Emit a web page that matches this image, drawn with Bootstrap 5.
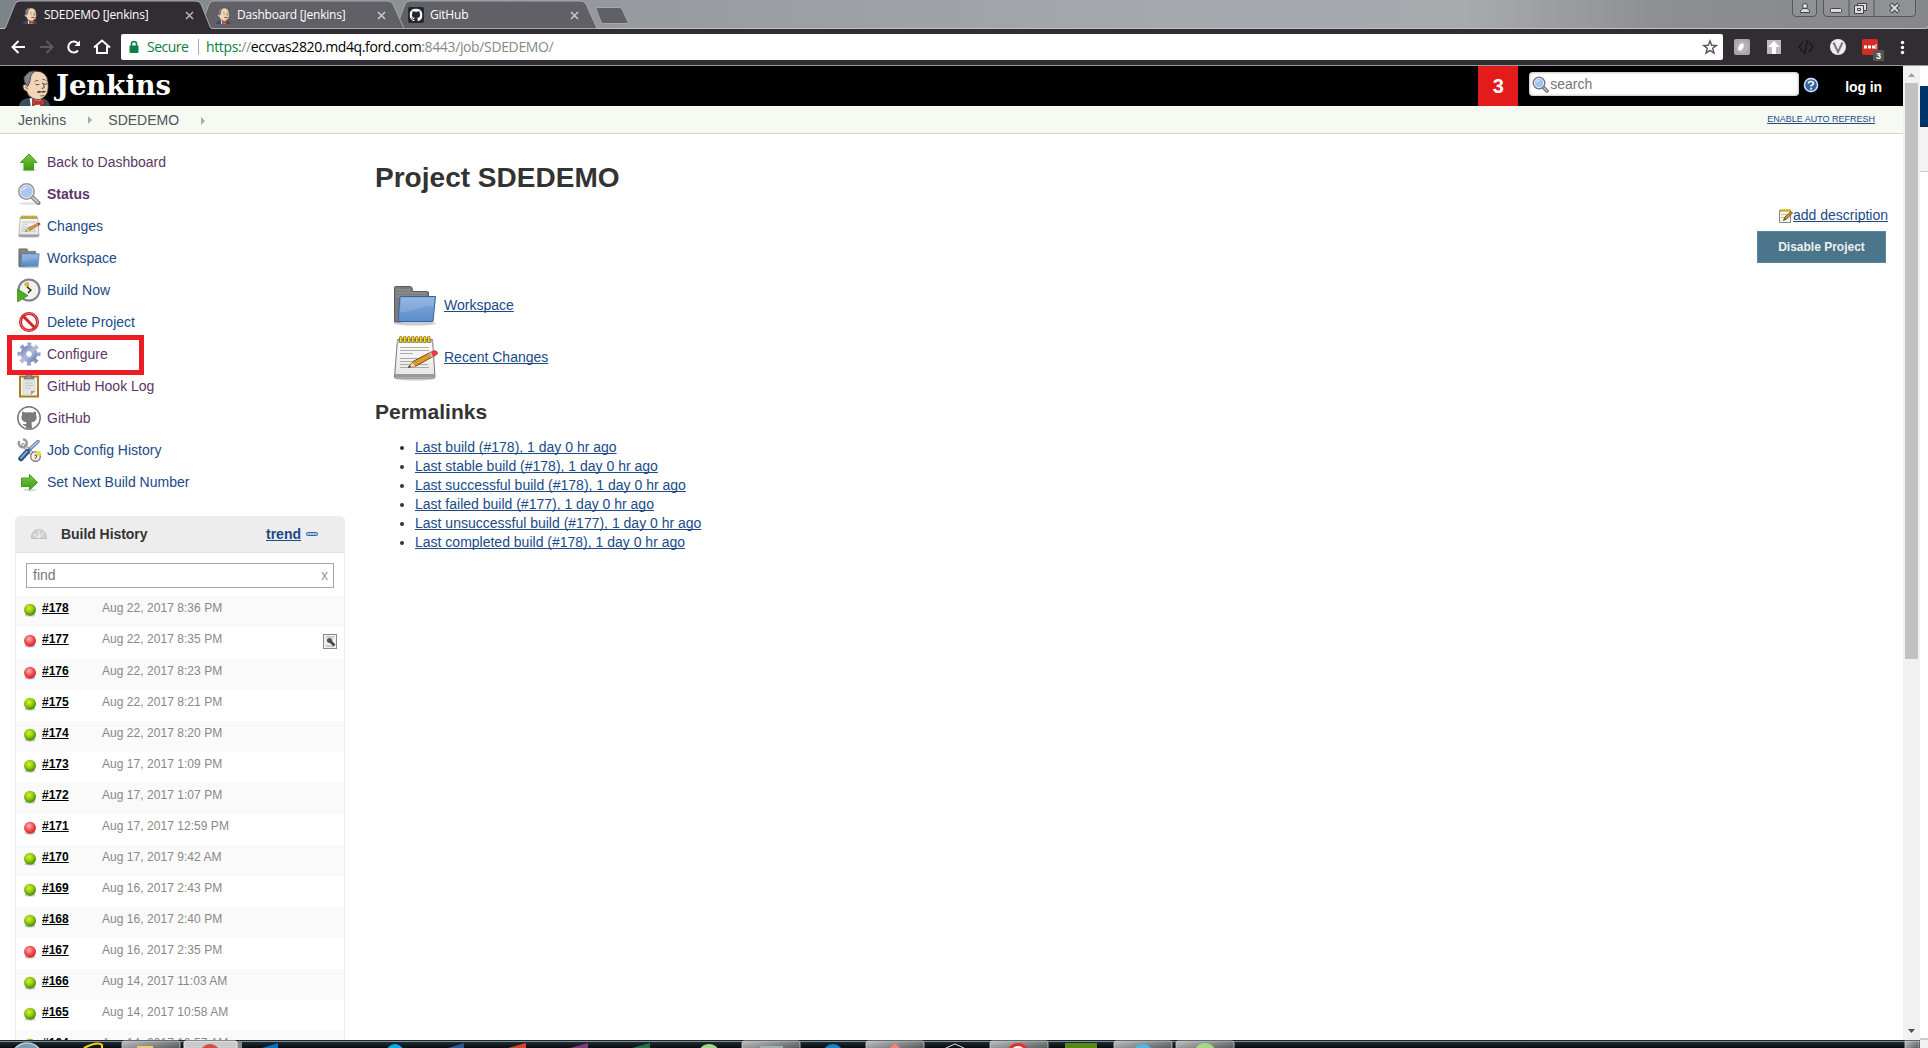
<!DOCTYPE html>
<html lang="en">
<head>
<meta charset="utf-8">
<title>SDEDEMO [Jenkins]</title>
<link href="https://cdn.jsdelivr.net/npm/bootstrap@5.3.0/dist/css/bootstrap.min.css" rel="stylesheet">
<style>
html,body{height:1048px;overflow:hidden}
body{font-family:"Liberation Sans",Arial,sans-serif;font-size:14px;line-height:19px;color:#333;background:#fff}
svg{display:block;flex:none}
a{color:#204a87;text-decoration-skip-ink:none}
.seg{font-family:"Open Sans","Noto Sans",sans-serif}
.tabstrip{height:29px;background:linear-gradient(90deg,#7d8488 0,#8b9093 20%,#979a9e 33%,#a5a8ac 60%,#a8abae 76%,#8e8f90 86%,#858788 100%)}
.tabtitle{font-size:12px;line-height:26px;color:#fff;letter-spacing:-.22px;margin-left:6px}
.chrometab{height:29px;padding-top:1px}
.toolbar{height:37px;background:#322c33;border-bottom:1px solid #9b999c;padding-left:9px}
.omni{width:1602px;height:26px;background:#fff;border-radius:2px;padding-left:8px;font-size:14px;line-height:26px}
.viewport-h{height:974px}
.page{width:1903px}
.jhead{height:40px;background:#000}
.logotext{font-family:"DejaVu Serif","Liberation Serif",serif;font-weight:700;font-size:27.5px;line-height:32px;color:#fff;letter-spacing:-.1px;margin-left:5px;padding-top:3px}
.alertbox{width:40px;height:40px;background:#e31b1b;font-size:20px;line-height:40px;color:#fff}
.searchbox{width:270px;height:24px;border-radius:4px;background:#fff;box-shadow:inset 0 0 3px #888;color:#757575;margin-left:11px;margin-top:6px}
.crumbs{height:28px;background:#f6faf2;border-bottom:1px solid #d3d7cf;padding-left:18px;color:#4d545d;line-height:28px}
.refresh{font-size:9px;line-height:12px;margin-top:-1px}
.side{width:345px;padding-top:12px}
.task{height:32px;padding-left:17px}
.task a{text-decoration:none;margin-left:6px}
.task a.seen{color:#5c3566}
.history{width:330px;height:540px;margin-left:15px;margin-top:18px;border:1px solid #eee;border-top:0;border-radius:5px 5px 0 0;overflow:hidden}
.histhead{height:37px;background:#ededed;border-bottom:1px solid #e4e4e4;font-weight:700;padding-left:15px;color:#333}
.findbox{height:25px;margin:10px 10px 8px;border:1px solid #a5a5a5;color:#777;padding:0 5px 0 6px}
.build{height:31px;padding:3px 7px 0 7px;background:#fff}
.build.stripe{background:#fafafa}
.build a{width:60px;margin-left:5px;color:#000;font-weight:700;font-size:12px}
.build time{font-size:12px;color:#888;letter-spacing:.04px}
.mainpane{padding:26px 15px 0 30px}
h1{font-size:28px;font-weight:700;line-height:36px;margin:0;letter-spacing:.02px}
h2{font-size:21px;font-weight:700;line-height:24px;margin:0}
.disable{width:129px;height:32px;background:#4b758b;border:1px solid #5788a1;border-radius:0;color:#eee;font-size:12px;font-weight:700;padding:0;margin-right:2px;margin-top:6px}
.permalinks{margin:14px 0 0;padding-left:40px}
.bigitem{height:48px;margin-left:16px}
.bigitem a{margin-left:5px}
.sbar{width:17px;background:#f1f1f1}
.thumb{width:13px;height:576px;background:#c1c1c1}
.peek{width:8px;background:#fff}
.marker{left:7px;top:335px;width:137px;height:40px;border:5px solid #ed1c24}
.tbar{height:8px}
</style>
<script src="https://cdn.jsdelivr.net/npm/bootstrap@5.3.0/dist/js/bootstrap.bundle.min.js"></script>
</head>
<body>
<svg width="0" height="0" class="position-absolute">
<defs>
<radialGradient id="gg" cx=".42" cy=".35" r=".65"><stop offset="0" stop-color="#d8f030"/><stop offset=".5" stop-color="#94cc10"/><stop offset="1" stop-color="#448400"/></radialGradient>
<radialGradient id="rg" cx=".42" cy=".35" r=".65"><stop offset="0" stop-color="#ffb8b8"/><stop offset=".55" stop-color="#f45050"/><stop offset="1" stop-color="#d02028"/></radialGradient>
<linearGradient id="grn" x2="0" y2="1"><stop offset="0" stop-color="#7cc850"/><stop offset="1" stop-color="#3a9a0c"/></linearGradient>
<linearGradient id="fol" x2="0" y2="1"><stop offset="0" stop-color="#86aede"/><stop offset="1" stop-color="#5a8cc8"/></linearGradient>
<linearGradient id="pap" x2="0" y2="1"><stop offset="0" stop-color="#fff"/><stop offset="1" stop-color="#e4e4e2"/></linearGradient>
<linearGradient id="gear" x2="1" y2="1"><stop offset="0" stop-color="#7d8dba"/><stop offset=".5" stop-color="#b4bddb"/><stop offset="1" stop-color="#7584b4"/></linearGradient>
<linearGradient id="win" x2="1" y2="1"><stop offset="0" stop-color="#c0c0c0"/><stop offset="1" stop-color="#3c4042"/></linearGradient>
<linearGradient id="task" x2="0" y2="1"><stop offset="0" stop-color="#26343a"/><stop offset="1" stop-color="#080d12"/></linearGradient>
</defs>
<symbol id="ok" viewBox="0 0 14 14"><ellipse cx="7" cy="12" rx="5.500" ry="1.500" fill="#ccc"/><circle cx="7" cy="6.800" r="6" fill="url(#gg)"/></symbol>
<symbol id="bad" viewBox="0 0 14 14"><ellipse cx="7" cy="12" rx="5.500" ry="1.500" fill="#ccc"/><circle cx="7" cy="6.800" r="6" fill="url(#rg)"/></symbol>
<symbol id="folder" viewBox="0 0 48 48"><ellipse cx="24" cy="42.500" rx="21" ry="2" fill="#ccc"/><path d="M3.500 41V6.500Q3.500 5.500 4.500 5.500H19.500Q20.500 5.500 21 7L22 10.500H36Q37.500 10.500 37.500 12V38L7 41Z" fill="#7b7b7b" stroke="#5c5c5c"/><path d="M5 9H19M5 12H35M5 15H35" stroke="#999"/><path d="M9 15.500H44.500L42 40.500H7Z" fill="url(#fol)" stroke="#3465a4"/><path d="M10 17H43L42 25C30 24 26 31 9 31Z" fill="#fff" opacity=".13"/></symbol>
<symbol id="note" viewBox="0 0 48 48"><ellipse cx="24" cy="45.500" rx="20" ry="2" fill="#ccc"/><path d="M6.500 6.500H41.500L44 44Q44 45 42.500 45H4.500Q3.500 45 3.500 44Z" fill="url(#pap)" stroke="#777"/><path d="M4 42.500H43.500" stroke="#999" stroke-width="3"/><path d="M6 7H41.500V10H6Z" fill="#bbb"/><g fill="#f0d840" stroke="#8a7400" stroke-width=".9"><rect x="8.500" y="3.500" width="2.500" height="6" rx="1"/><rect x="12.500" y="3.500" width="2.500" height="6" rx="1"/><rect x="16.500" y="3.500" width="2.500" height="6" rx="1"/><rect x="20.500" y="3.500" width="2.500" height="6" rx="1"/><rect x="24.500" y="3.500" width="2.500" height="6" rx="1"/><rect x="28.500" y="3.500" width="2.500" height="6" rx="1"/><rect x="32.500" y="3.500" width="2.500" height="6" rx="1"/><rect x="36.500" y="3.500" width="2.500" height="6" rx="1"/></g><path d="M9 14.500H38M9 17.500H38M9 20.500H22M9 25.500H32M9 28.500H25M9 31.500H37M9 34.500H38" stroke="#aaa"/><path d="M17 34.500L22 28.500L40 19L42 23.500L25 33Z" fill="#d99a30" stroke="#7a4c08"/><path d="M17 34.500L21.500 29.500L24.500 33.500Z" fill="#ead8b0"/><path d="M17 34.500L19 32.500L20 34Z" fill="#222"/><path d="M39 19.500L43.500 17.500Q47 18 46.500 21L42 24Z" fill="#ef3b3b" stroke="#b02020" stroke-width=".6"/><path d="M38 20L40 24.500L42 23.500L40 19Z" fill="#bbb"/></symbol>
<symbol id="lens" viewBox="0 0 24 24"><ellipse cx="12" cy="21.500" rx="10" ry="1.500" fill="#e4e4e4"/><path d="M15 15L21.500 21" stroke="#777" stroke-width="4" stroke-linecap="round"/><path d="M15 15L21 20.500" stroke="#ccc" stroke-width="2" stroke-linecap="round"/><circle cx="9.500" cy="9.500" r="7.500" fill="#a8c8f0" stroke="#999" stroke-width="2"/><circle cx="9.500" cy="9.500" r="6.500" fill="none" stroke="#eee"/><path d="M4.500 9Q6 4.500 11 5Q8 7 4.500 9Z" fill="#e8f2ff"/></symbol>
<symbol id="lensblue" viewBox="0 0 17 17"><path d="M11 11L15 15" stroke="#666" stroke-width="3.500" stroke-linecap="round"/><path d="M11 11L15 15" stroke="#ccc" stroke-width="1.300" stroke-linecap="round"/><circle cx="7" cy="7" r="5.800" fill="#9cc4f4" stroke="#777" stroke-width="1.400"/><circle cx="7" cy="7" r="4.600" fill="none" stroke="#e4eefb"/><path d="M3.500 6.500Q5 3.500 8 4Q6 5.500 3.500 6.500Z" fill="#fff"/></symbol>
<symbol id="butler" viewBox="0 0 34 38"><path d="M1 38Q2 31 10 30H25Q32 31 33 38Z" fill="#335061"/><path d="M12 30L24 30L23 38H13Z" fill="#fff"/><path d="M7 13Q8 1 18 2Q30 2 31 14Q32 24 28 28Q22 34 15 30Q10 28 9 23Q5 22 5 18Q5 15 8 16Z" fill="#f0d6b7" stroke="#3b2a20" stroke-width=".9"/><path d="M8 16Q4 9 8 6Q12 1 18 2Q14 4 13 8Q13 13 10 18Z" fill="#808388" stroke="#222" stroke-width=".7"/><path d="M17 13Q19 11 21 12M25 11Q27 10 29 12" fill="none" stroke="#6a5140" stroke-width=".9"/><path d="M18 15.500Q20 17 22 15.500M26 15Q28 16.500 30 15M25 14Q28 18 26.500 19.500L24.500 20M7.500 18.500L10 20.500" fill="none" stroke="#3b2a20" stroke-width=".9"/><path d="M19 24Q21 21.500 24 23Q27 21.500 29 23.500Q26 25 24 24Q22 25.500 19 24Z" fill="#5a4a40"/><path d="M23 27.500Q25 28.200 27 27" fill="none" stroke="#8b4a40" stroke-width="1"/><path d="M15 31L21 34L27 30.500V38L21 35.500L15 38Z" fill="#d33833" stroke="#70201c" stroke-width=".8"/><circle cx="21" cy="34.500" r="2" fill="#d33833" stroke="#70201c" stroke-width=".7"/></symbol>
<symbol id="cat" viewBox="0 0 16 16"><path d="M8 0C3.580 0 0 3.580 0 8c0 3.540 2.290 6.530 5.470 7.590.4.070.55-.17.55-.38 0-.19-.01-.82-.01-1.490-2.010.37-2.530-.49-2.690-.94-.09-.23-.48-.94-.82-1.130-.28-.15-.68-.52-.01-.53.63-.01 1.080.58 1.230.82.72 1.210 1.870.87 2.330.66.07-.52.28-.87.51-1.070-1.780-.2-3.640-.89-3.640-3.950 0-.87.31-1.590.82-2.150-.08-.2-.36-1.020.08-2.120 0 0 .67-.21 2.200.82.64-.18 1.320-.27 2-.27s1.360.09 2 .27c1.530-1.040 2.200-.82 2.200-.82.44 1.100.16 1.920.08 2.120.51.56.82 1.270.82 2.150 0 3.070-1.870 3.750-3.650 3.950.29.25.54.73.54 1.480 0 1.070-.01 1.930-.01 2.200 0 .21.15.46.55.38A8.010 8.010 0 0 0 16 8c0-4.420-3.580-8-8-8"/></symbol>
</svg>

<div class="d-flex">
<div class="flex-grow-1">
<header class="tabstrip position-relative overflow-hidden">
  <svg class="position-absolute top-0 start-0" width="1928" height="29">
    <path d="M0 28.500H1926L1928 26" stroke="#bfc2c4" fill="none"/>
    <path d="M396 28.500L405 4Q407 1 410 1H580Q584 1 586 4L597 28.500Z" fill="#606066" stroke="#a6a8ab"/>
    <path d="M200 28.500L209 4Q211 1 214 1H387Q391 1 393 4L404 28.500Z" fill="#606066" stroke="#a6a8ab"/>
    <path d="M5 29L15 4Q17 1 20 1H195Q199 1 201 4L211 29Z" fill="#322c33" stroke="#a6a8ab"/>
    <path d="M5 29H211" stroke="#322c33" stroke-width="2"/>
    <path d="M596 8.500Q596 7.500 598 7.500H619Q621 7.500 622 9L628 22Q629 23.500 627 23.500H604Q602 23.500 601 22Z" fill="#606066" stroke="#a6a8ab"/>
    <g fill="#8f9194" stroke="#55585b"><path d="M1792.500 0V13Q1793 16.500 1796 16.500H1813Q1816.500 16.500 1816.500 13V0M1823.500 0V13Q1824 16.500 1827 16.500H1912Q1915.500 16.500 1915.500 13V0M1849 0V16M1874 0V16"/></g>
    <g fill="#ddd" stroke="#444"><circle cx="1805" cy="6" r="2.500"/><path d="M1800.500 12.500V10.500L1803 8.500H1807L1809.500 10.500V12.500Z"/><rect x="1830.500" y="8.500" width="11" height="4" rx="1"/><path d="M1857.500 3.500H1866.500V10.500H1857.500Z"/><path d="M1854.500 5.500H1863.500V13.500H1854.500ZM1857.500 8.500H1860.500V10.500H1857.500Z"/></g>
    <path d="M1890.500 4L1898.500 12M1898.500 4L1890.500 12" stroke="#444" stroke-width="4"/><path d="M1891 4.500L1898 11.500M1898 4.500L1891 11.500" stroke="#ddd" stroke-width="2"/>
  </svg>
  <div class="d-flex position-relative seg">
    <div class="chrometab d-flex align-items-center" style="width:194px;padding-left:22px"><svg width="16" height="17"><use href="#butler"/></svg><span class="tabtitle flex-grow-1">SDEDEMO [Jenkins]</span><svg width="9" height="9"><path d="M1 1L8 8M8 1L1 8" stroke="#b8b6b8" stroke-width="1.500"/></svg></div>
    <div class="chrometab d-flex align-items-center" style="width:192px;padding-left:21px"><svg width="16" height="17"><use href="#butler"/></svg><span class="tabtitle flex-grow-1">Dashboard [Jenkins]</span><svg width="9" height="9"><path d="M1 1L8 8M8 1L1 8" stroke="#ccc" stroke-width="1.500"/></svg></div>
    <div class="chrometab d-flex align-items-center" style="width:193px;padding-left:22px"><svg width="16" height="16"><rect width="16" height="16" rx="2" fill="#25282b"/><use href="#cat" x="1.500" y="1.500" width="13" height="13" fill="#fff"/></svg><span class="tabtitle flex-grow-1">GitHub</span><svg width="9" height="9"><path d="M1 1L8 8M8 1L1 8" stroke="#ccc" stroke-width="1.500"/></svg></div>
  </div>
</header>

<div class="toolbar d-flex align-items-center">
  <svg width="112" height="26" fill="none" stroke="#fff" stroke-width="2"><path d="M16 13H4M9.500 7L3.500 13L9.500 19"/><path d="M31 13H43M37.500 7L43.500 13L37.500 19" stroke="#5e5960"/><path d="M69 16.500A5.500 5.500 0 1 1 69 9.500"/><path d="M71 6.500V12H65.500Z" fill="#fff" stroke="none"/><path d="M85 13.500L93 6.500L101 13.500M88 12V19H98V12"/></svg>
  <div class="omni d-flex align-items-center seg">
    <svg width="10" height="14"><path d="M2.500 6V4A2.500 2.500 0 0 1 7.500 4V6" fill="none" stroke="#0b8043" stroke-width="1.600"/><rect x=".5" y="5.500" width="9" height="7.500" rx="1" fill="#0b8043"/></svg>
    <span style="margin-left:8px;width:42px;color:#0b8043;letter-spacing:-.5px">Secure</span>
    <span class="border-start" style="height:16px;margin:0 7px 0 9px;border-color:#aaa!important"></span>
    <span class="flex-grow-1" style="color:#888;letter-spacing:-.37px"><span style="color:#0b8043">https:</span>//<span class="text-black">eccvas2820.md4q.ford.com</span>:8443/job/SDEDEMO/</span>
    <svg width="24" height="24" class="me-0"><path d="M11 6L12.700 10.300L17.300 10.500L13.700 13.300L15 18L11 15.300L7 18L8.300 13.300L4.700 10.500L9.300 10.300Z" fill="none" stroke="#555" stroke-width="1.400"/></svg>
  </div>
  <svg width="200" height="30" viewBox="1723 32 200 30"><rect x="1734" y="39" width="16" height="16" rx="2" fill="#a5a7a8"/><circle cx="1742" cy="47" r="6.500" fill="#bbb" opacity=".6"/><ellipse cx="1741" cy="47" rx="2.300" ry="4" transform="rotate(25 1741 47)" fill="#fff"/><rect x="1767" y="40" width="14" height="14" fill="#b9bbbd"/><path d="M1774 41L1780 47H1776V54H1772V47H1768Z" fill="#fff"/><path d="M1803 42L1799 47L1803 52M1809 42L1813 47L1809 52M1807.500 40L1804.500 54" fill="none" stroke="#1c191d" stroke-width="1.600"/><circle cx="1838" cy="47" r="8" fill="#ededed"/><path d="M1833.500 42.500L1838 52L1842.500 42.500" fill="none" stroke="#77797b" stroke-width="2"/><rect x="1862" y="39" width="16" height="16" rx="2" fill="#d32d27"/><g fill="#fff"><rect x="1864" y="45.500" width="3" height="3"/><rect x="1868" y="45.500" width="3" height="3"/><rect x="1872" y="45.500" width="3" height="3"/><rect x="1875.500" y="44" width="1" height="5"/></g><rect x="1873" y="50" width="11" height="11" rx="1" fill="#555"/><text x="1876" y="59" fill="#fff" font-size="9" font-weight="bold" font-family="Liberation Sans">3</text><g fill="#fff"><circle cx="1902.500" cy="42.500" r="1.700"/><circle cx="1902.500" cy="47.500" r="1.700"/><circle cx="1902.500" cy="52.500" r="1.700"/></g></svg>
</div>

<div class="d-flex viewport-h overflow-hidden">
  <div class="page">
    <div class="jhead d-flex">
      <svg style="margin:3px 0 0 18px" width="33" height="37"><use href="#butler"/></svg>
      <div class="logotext flex-grow-1">Jenkins</div>
      <div class="alertbox fw-bold text-center">3</div>
      <div class="searchbox d-flex align-items-center"><svg width="17" height="17" style="margin-left:3px;margin-right:1px"><use href="#lensblue"/></svg><span>search</span></div>
      <svg width="16" height="16" style="margin:11px 0 0 4px"><circle cx="8" cy="8" r="7.500" fill="#3465a4"/><circle cx="8" cy="8" r="6.500" fill="none" stroke="#e0e8f4" stroke-width="1.300"/><path d="M5.500 6.500Q5.500 4.500 8 4.500T10.500 6.300Q10.500 7.300 9 8Q8 8.500 8 9.500M8 10.800V12.500" fill="none" stroke="#fff" stroke-width="1.700"/></svg>
      <a class="text-white fw-bold text-decoration-none" style="margin:12px 21px 0 26px;letter-spacing:-.1px">log in</a>
    </div>
    <div class="crumbs d-flex align-items-center"><span style="letter-spacing:.12px">Jenkins</span><svg width="4" height="8" style="margin:0 16px 0 22px"><path d="M0 0L4 4L0 8Z" fill="#aaa"/></svg><span class="flex-grow-1">SDEDEMO<svg class="d-inline-block" width="4" height="8" style="margin-left:22px"><path d="M0 0L4 4L0 8Z" fill="#aaa"/></svg></span><a class="refresh" href="#" style="margin-right:28px">ENABLE AUTO REFRESH</a></div>
    <div class="d-flex">
      <nav class="side flex-shrink-0">
        <div class="task d-flex align-items-center"><svg width="24" height="24"><ellipse cx="12" cy="20" rx="8" ry="1.500" fill="#ddd"/><path d="M12 4L20 12.500H16.500V20H7V12.500H3.500Z" fill="url(#grn)" stroke="#3f9f18"/></svg><a class="seen" href="#">Back to Dashboard</a></div>
        <div class="task d-flex align-items-center"><svg width="24" height="24"><use href="#lens"/></svg><a class="seen fw-bold" href="#">Status</a></div>
        <div class="task d-flex align-items-center"><svg width="24" height="24"><use href="#note"/></svg><a href="#">Changes</a></div>
        <div class="task d-flex align-items-center"><svg width="24" height="24"><use href="#folder"/></svg><a href="#">Workspace</a></div>
        <div class="task d-flex align-items-center"><svg width="24" height="24"><circle cx="12" cy="12" r="10.500" fill="#f2f2ec" stroke="#7d7d94" stroke-width="2"/><path d="M12 12L6.500 6A8 8 0 0 1 12 4Z" fill="#d4b83c"/><path d="M10 9L14 12L11 15" fill="none" stroke="#222" stroke-width="1.300"/><path d="M.5 11V24L11 17.500Z" fill="#4caf1e" stroke="#2f8a08" stroke-width=".7"/></svg><a href="#">Build Now</a></div>
        <div class="task d-flex align-items-center"><svg width="24" height="24"><circle cx="12" cy="12" r="8.500" fill="#fff" stroke="#c8161c" stroke-width="3"/><circle cx="12" cy="12" r="8.500" fill="none" stroke="#f08080"/><path d="M6 6L18 18" stroke="#d3242a" stroke-width="3"/></svg><a href="#">Delete Project</a></div>
        <div class="task d-flex align-items-center"><svg width="24" height="24"><circle cx="12" cy="12" r="9.500" fill="none" stroke="url(#gear)" stroke-width="4" stroke-dasharray="3.800 3.660" stroke-dashoffset="1.900"/><circle cx="12" cy="12" r="5.900" fill="none" stroke="url(#gear)" stroke-width="5"/><circle cx="12" cy="12" r="3.400" fill="#fff" stroke="#7584b4" stroke-width=".7"/></svg><a class="seen" href="#">Configure</a></div>
        <div class="task d-flex align-items-center"><svg width="24" height="24"><rect x="3" y="2.500" width="18" height="20" fill="#f2f2f0" stroke="#b07a20" stroke-width="2"/><path d="M6 6H18V17L14 21H6Z" fill="#e4e4e2" stroke="#ccc" stroke-width=".6"/><path d="M8 9H16M8 11.500H16M8 14H14" stroke="#c8c8c8"/><path d="M18 17H14V21Z" fill="#999"/><path d="M7 5V3H9.500V.5H14.500V3H17V5Z" fill="#8a8f88" stroke="#666" stroke-width=".6"/></svg><a class="seen" href="#">GitHub Hook Log</a></div>
        <div class="task d-flex align-items-center"><svg width="24" height="24"><circle cx="12" cy="12" r="11.200" fill="#fff" stroke="#777" stroke-width="1.500"/><path d="M5 6Q5.500 5 8 6.500Q12 5.800 16 6.500Q18.500 5 19 6V9Q20.500 12 18.500 14.500Q17 16 14.500 16.200L15 22.500H9V20Q6.500 20 5.500 18Q7.500 18 9 18L9.500 16.200Q6.500 16 5.500 14.500Q3.500 12 5 9Z" fill="#7a7a7a"/></svg><a class="seen" href="#">GitHub</a></div>
        <div class="task d-flex align-items-center"><svg width="24" height="24" fill="none" stroke-linecap="round"><path d="M6 7L20 20" stroke="#888" stroke-width="4"/><path d="M6 7L19 19" stroke="#ddd" stroke-width="2.400"/><path d="M2 4A4 4 0 1 0 7 1.500" stroke="#999" stroke-width="2.400"/><path d="M21 3.500L12 12" stroke="#5580ba" stroke-width="3.500"/><path d="M21 3.500L14 10" stroke="#b4cae8" stroke-width="1.500"/><path d="M10 14L4 20.500" stroke="#2c4f82" stroke-width="5.500"/><path d="M10 13.500L4 20" stroke="#7ba0d4" stroke-width="2"/><circle cx="18.500" cy="18.500" r="4.800" fill="#f4f0e4" stroke="#8f7d92" stroke-width="1.400"/><path d="M18.500 13.500L23.500 13V18L19 18Z" fill="#e8dc48" stroke="none"/><path d="M18 17L20 18.500L18 20.500" stroke="#333"/></svg><a href="#">Job Config History</a></div>
        <div class="task d-flex align-items-center"><svg width="24" height="24"><ellipse cx="13" cy="20" rx="7" ry="1.500" fill="#ddd"/><path d="M4.500 8H12.500V4.500L20.500 12.500L12.500 20V16.500H4.500Z" fill="url(#grn)" stroke="#3f9f18"/></svg><a href="#">Set Next Build Number</a></div>
        <section class="history">
          <div class="histhead d-flex align-items-center"><svg width="16" height="14" fill="none"><path d="M.5 11.500Q0 3 8 2.500Q15 3 15.500 11.500Z" fill="#d0d0d0" stroke="#c0c0c0"/><path d="M8 11V3M2 7L8 11L13 5" stroke="#f4f4f4"/></svg><span style="margin-left:14px;width:205px;letter-spacing:-.05px">Build History</span><a href="#" style="width:35px">trend</a><svg width="12" height="6" style="margin-left:5px"><rect x=".5" y="1.500" width="11" height="3" rx="1" fill="#a9c4e6" stroke="#3567a5"/></svg></div>
          <div class="findbox d-flex align-items-center justify-content-between"><span>find</span><span style="color:#999">x</span></div>
          <div class="build stripe d-flex"><svg class="mt-1" width="14" height="14"><use href="#ok"/></svg><a href="#">#178</a><time>Aug 22, 2017 8:36 PM</time></div>
          <div class="build d-flex" style="height:32px"><svg class="mt-1" width="14" height="14"><use href="#bad"/></svg><a href="#">#177</a><time class="flex-grow-1">Aug 22, 2017 8:35 PM</time><svg width="14" height="15" class="mt-1"><rect x=".5" y=".5" width="13" height="14" fill="#eee" stroke="#888"/><path d="M3 3H11M3 6H10M3 12H11" stroke="#aaa"/><circle cx="6.500" cy="6.500" r="2.500" fill="#555"/><path d="M7 7L11.500 11.500" stroke="#444" stroke-width="2.500"/></svg></div>
          <div class="build stripe d-flex"><svg class="mt-1" width="14" height="14"><use href="#bad"/></svg><a href="#">#176</a><time>Aug 22, 2017 8:23 PM</time></div>
          <div class="build d-flex"><svg class="mt-1" width="14" height="14"><use href="#ok"/></svg><a href="#">#175</a><time>Aug 22, 2017 8:21 PM</time></div>
          <div class="build stripe d-flex"><svg class="mt-1" width="14" height="14"><use href="#ok"/></svg><a href="#">#174</a><time>Aug 22, 2017 8:20 PM</time></div>
          <div class="build d-flex"><svg class="mt-1" width="14" height="14"><use href="#ok"/></svg><a href="#">#173</a><time>Aug 17, 2017 1:09 PM</time></div>
          <div class="build stripe d-flex"><svg class="mt-1" width="14" height="14"><use href="#ok"/></svg><a href="#">#172</a><time>Aug 17, 2017 1:07 PM</time></div>
          <div class="build d-flex"><svg class="mt-1" width="14" height="14"><use href="#bad"/></svg><a href="#">#171</a><time>Aug 17, 2017 12:59 PM</time></div>
          <div class="build stripe d-flex"><svg class="mt-1" width="14" height="14"><use href="#ok"/></svg><a href="#">#170</a><time>Aug 17, 2017 9:42 AM</time></div>
          <div class="build d-flex"><svg class="mt-1" width="14" height="14"><use href="#ok"/></svg><a href="#">#169</a><time>Aug 16, 2017 2:43 PM</time></div>
          <div class="build stripe d-flex"><svg class="mt-1" width="14" height="14"><use href="#ok"/></svg><a href="#">#168</a><time>Aug 16, 2017 2:40 PM</time></div>
          <div class="build d-flex"><svg class="mt-1" width="14" height="14"><use href="#bad"/></svg><a href="#">#167</a><time>Aug 16, 2017 2:35 PM</time></div>
          <div class="build stripe d-flex"><svg class="mt-1" width="14" height="14"><use href="#ok"/></svg><a href="#">#166</a><time>Aug 14, 2017 11:03 AM</time></div>
          <div class="build d-flex"><svg class="mt-1" width="14" height="14"><use href="#ok"/></svg><a href="#">#165</a><time>Aug 14, 2017 10:58 AM</time></div>
          <div class="build stripe d-flex"><svg class="mt-1" width="14" height="14"><use href="#ok"/></svg><a href="#">#164</a><time>Aug 14, 2017 10:57 AM</time></div>
        </section>
      </nav>
      <main class="mainpane flex-grow-1">
        <h1>Project SDEDEMO</h1>
        <div class="d-flex flex-column align-items-end" style="margin-top:10px">
          <div class="d-flex align-items-center"><svg width="15" height="16" viewBox="0 0 15 16"><path d="M1.500 2.500H12.500V14.500H1.500Z" fill="#f4f4f2" stroke="#888"/><path d="M2 2.500H13" stroke="#d8b820" stroke-width="3" stroke-dasharray="1.500 .6"/><path d="M3 6.500H9M3 9.500H7" stroke="#bbb"/><path d="M5.500 12.500L7 9L13 3.500L14.500 5L8.500 11Z" fill="#d99a30" stroke="#5c3b08" stroke-width=".9"/></svg><a href="#">add description</a></div>
          <button class="btn disable" type="button">Disable Project</button>
        </div>
        <div class="bigitem d-flex align-items-center" style="margin-top:18px"><svg width="48" height="48"><use href="#folder"/></svg><a href="#">Workspace</a></div>
        <div class="bigitem d-flex align-items-center mt-1"><svg width="48" height="48"><use href="#note"/></svg><a href="#">Recent Changes</a></div>
        <h2 style="margin-top:19px">Permalinks</h2>
        <ul class="permalinks">
          <li><a href="#">Last build (#178), 1 day 0 hr ago</a></li>
          <li><a href="#">Last stable build (#178), 1 day 0 hr ago</a></li>
          <li><a href="#">Last successful build (#178), 1 day 0 hr ago</a></li>
          <li><a href="#">Last failed build (#177), 1 day 0 hr ago</a></li>
          <li><a href="#">Last unsuccessful build (#177), 1 day 0 hr ago</a></li>
          <li><a href="#">Last completed build (#178), 1 day 0 hr ago</a></li>
        </ul>
      </main>
    </div>
  </div>
  <div class="sbar d-flex flex-column align-items-center">
    <svg width="17" height="17"><path d="M5 11L8.500 7L12 11Z" fill="#a0a0a0"/></svg>
    <div class="thumb"></div>
    <svg width="17" height="17" class="mt-auto"><path d="M5 6L8.500 10L12 6Z" fill="#505050"/></svg>
  </div>
  <div class="peek d-flex flex-column">
    <div style="height:20px"></div><div style="height:41px;background:#003469;border-bottom:1px solid #1c1c3c"></div><div style="height:45px;background:#f4f4f4;border-bottom:1px solid #ccc"></div><div class="flex-grow-1"></div><div style="height:2px;background:#ccc"></div>
  </div>
</div>
<footer class="tbar">
<svg width="1928" height="8"><rect width="1920" height="8" fill="url(#task)"/><path d="M0 .5H1920" stroke="#20282e"/><path d="M0 1.500H1920" stroke="#7d8f98"/><rect x="1920" width="8" height="8" fill="#f2f2f2"/>
<g fill="url(#win)" stroke="#c8cccc" stroke-width=".8"><rect x="122" y="1" width="58" height="12" rx="2"/><rect x="742" y="1" width="58" height="12" rx="2"/><rect x="866" y="1" width="58" height="12" rx="2"/><rect x="990" y="1" width="58" height="12" rx="2"/><rect x="1114" y="1" width="58" height="12" rx="2"/><rect x="1176" y="1" width="58" height="12" rx="2"/><rect x="1905" y="1" width="14" height="12"/></g>
<rect x="184" y="1" width="58" height="12" rx="2" fill="#888"/><rect x="184" y="1" width="53" height="12" rx="2" fill="#cacaca" stroke="#eee"/>
<circle cx="27" cy="19" r="16" fill="#7d9cb4" stroke="#b9d0df" stroke-width="1.500"/><path d="M84 8Q98 1 102 5V8" fill="none" stroke="#ffd20a" stroke-width="2"/><rect x="137" y="6" width="16" height="3" fill="#e8cc78"/><circle cx="210" cy="14" r="10" fill="#dc4a3e"/>
<path d="M262 8L278 3V8Z" fill="#0072c6"/><circle cx="395" cy="13" r="9" fill="#00aff0"/><path d="M448 8L464 3V8Z" fill="#2b579a"/><path d="M508 8L526 3V8Z" fill="#d24726"/><path d="M570 8L588 3V8Z" fill="#80397b"/><path d="M632 8L650 3V8Z" fill="#217346"/><circle cx="709" cy="15" r="11" fill="#a6d785"/><rect x="760" y="6" width="23" height="2" fill="#9ab2b4"/><circle cx="833" cy="14" r="10" fill="#1187d4"/><path d="M895 3L901 9H889Z" fill="#ff8078"/><path d="M946 8L955 4L964 8" fill="none" stroke="#dce4ee"/><circle cx="1018" cy="14" r="9.500" fill="#fff" stroke="#e03030" stroke-width="3"/><rect x="1065" y="3" width="32" height="5" fill="#548c14"/><circle cx="1143" cy="14" r="10" fill="#4cb9e8"/><circle cx="1205" cy="14" r="11" fill="#a6d785"/></svg>
</footer>
</div>
</div>
<div class="marker position-absolute"></div>
</body>
</html>
